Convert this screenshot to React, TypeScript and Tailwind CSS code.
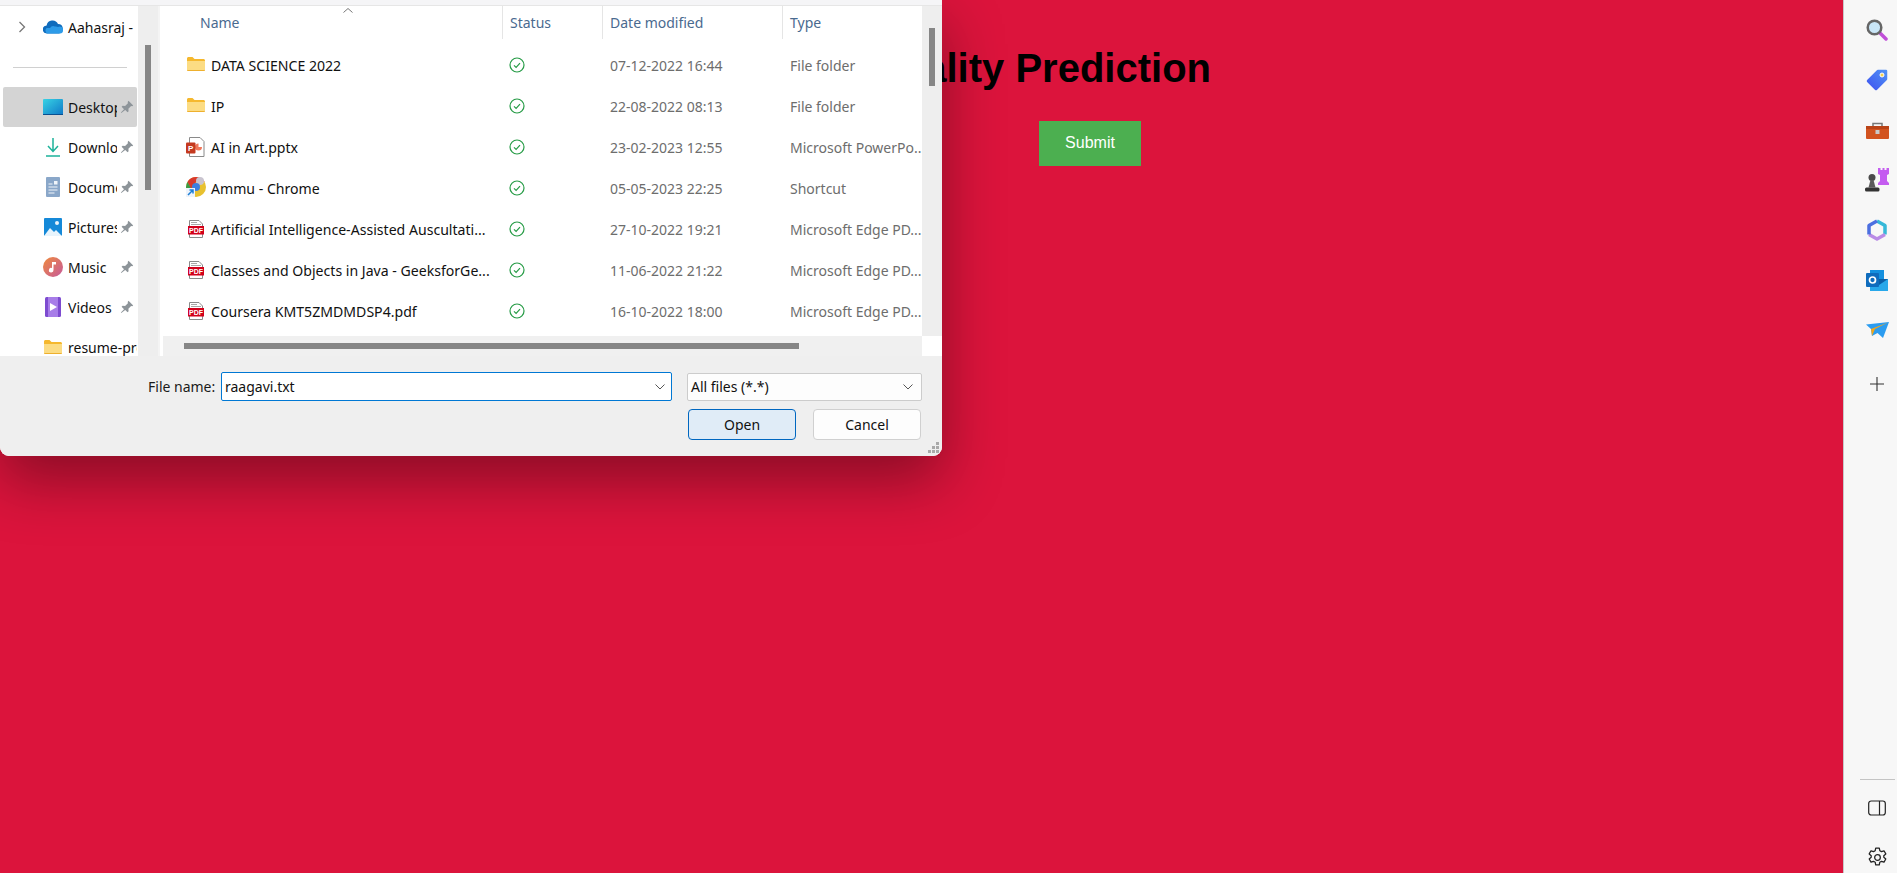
import React from "react";

const SEGOE = "font-['Noto_Sans','Open_Sans',sans-serif]";

const rows = [
  { name: "DATA SCIENCE 2022", date: "07-12-2022 16:44", type: "File folder", icon: "folder" },
  { name: "IP", date: "22-08-2022 08:13", type: "File folder", icon: "folder" },
  { name: "AI in Art.pptx", date: "23-02-2023 12:55", type: "Microsoft PowerPo...", icon: "ppt" },
  { name: "Ammu - Chrome", date: "05-05-2023 22:25", type: "Shortcut", icon: "chrome" },
  { name: "Artificial Intelligence-Assisted Auscultati...", date: "27-10-2022 19:21", type: "Microsoft Edge PD...", icon: "pdf" },
  { name: "Classes and Objects in Java - GeeksforGe...", date: "11-06-2022 21:22", type: "Microsoft Edge PD...", icon: "pdf" },
  { name: "Coursera KMT5ZMDMDSP4.pdf", date: "16-10-2022 18:00", type: "Microsoft Edge PD...", icon: "pdf" },
];

function FolderIcon({ className }: { className?: string }) {
  return (
    <svg className={className} viewBox="0 0 18 14">
      <path d="M0 1.500C0 .7.7 0 1.500 0h4L7.500 2H16.500c.8 0 1.500.7 1.500 1.500V12.500c0 .8-.7 1.500-1.500 1.500h-15C.7 14 0 13.300 0 12.500Z" fill="#f5b82e" />
      <path d="M0 4h18v8.500c0 .8-.7 1.500-1.500 1.500h-15C.7 14 0 13.300 0 12.500Z" fill="#fcdc83" />
      <path d="M0 13h18v.2c-.3.5-.8.8-1.500.8h-15c-.7 0-1.200-.3-1.500-.8Z" fill="#eeb02e" />
    </svg>
  );
}

function PdfIcon() {
  return (
    <svg className="ml-[1px] h-[18px] w-[16px]" viewBox="0 0 16 18">
      <path d="M1.500.5h9.500l3.500 3.500v13.500h-13Z" fill="#fff" stroke="#8a8a8a" />
      <path d="M3 2.500h6M3 4.500h10" stroke="#a8a8a8" />
      <rect x="0" y="6" width="16" height="8.500" fill="#d2001a" />
      <text x="8" y="12.800" textAnchor="middle" fontSize="7" fontWeight="700" fill="#fff" fontFamily="Liberation Sans, sans-serif">PDF</text>
    </svg>
  );
}

function PptIcon() {
  return (
    <svg className="-ml-[1px] h-[20px] w-[19px]" viewBox="0 0 19 20">
      <path d="M3.500.5h10.500l4 4v15h-14.500Z" fill="#fff" stroke="#8a8a8a" />
      <path d="M12.500 6.500a3.500 3.500 0 1 0 3.500 3.500h-3.500Z" fill="#f0775a" />
      <rect x="0" y="5.500" width="9.500" height="11" rx="1" fill="#c4391f" />
      <text x="4.700" y="14" textAnchor="middle" fontSize="8" fontWeight="700" fill="#fff" fontFamily="Liberation Sans, sans-serif">P</text>
    </svg>
  );
}

function ChromeIcon() {
  return (
    <svg className="-ml-[1px] -mt-[2px] h-[20px] w-[20px]" viewBox="0 0 20 20">
      <circle cx="10" cy="10" r="10" fill="#e8c12f" />
      <path d="M10 0a10 10 0 0 0-8.600 5L5 12l5-7h8.700A10 10 0 0 0 10 0Z" fill="#d9392c" />
      <path d="M1.400 5A10 10 0 0 0 5 18.600L9 13 5 11Z" fill="#3a9b46" />
      <circle cx="14" cy="4" r="4" fill="#c9c4cf" />
      <circle cx="10" cy="10" r="4" fill="#3d7fe0" />
      <rect x="0" y="11" width="9" height="9" fill="#eef3fa" />
      <path d="M2 18l5-5M3.500 13H7v3.500" stroke="#1c7fd6" strokeWidth="1.500" fill="none" />
    </svg>
  );
}

function RowIcon({ kind }: { kind: string }) {
  if (kind === "folder") return <FolderIcon className="-mt-[2px] h-[14px] w-[18px]" />;
  if (kind === "ppt") return <PptIcon />;
  if (kind === "chrome") return <ChromeIcon />;
  return <PdfIcon />;
}

function StatusIcon() {
  return (
    <svg className="-mt-[1px] h-[16px] w-[16px]" viewBox="0 0 16 16" fill="none" stroke="#259b45" strokeWidth="1.200">
      <circle cx="8" cy="8" r="7" />
      <path d="M5 8.300l2.100 2.100L11 6.200" />
    </svg>
  );
}

function Pin() {
  return (
    <svg className="h-[14px] w-[14px] shrink-0" viewBox="0 0 14 14" fill="#8d9499">
      <path d="M8.500.8l4.700 4.700-1 .8-1.100-.2-2.700 2.700.2 2.500-1 1-2.400-2.400L1.300 13l-.4-.4 3.100-3.400L1.600 6.800l1-1 2.500.2L7.900 3.300l-.2-1.200Z" />
    </svg>
  );
}

function NavRow({ label, icon, active, pin = true }: { label: string; icon: React.ReactNode; active?: boolean; pin?: boolean }) {
  return (
    <div className={`ml-[3px] flex h-[40px] w-[134px] items-center rounded-[2px] ${active ? "bg-[#d4d4d4]" : ""}`}>
      <div className="flex w-[60px] shrink-0 justify-end">
        <div className="flex h-[20px] w-[20px] items-center justify-center">{icon}</div>
      </div>
      <div className={`ml-[5px] overflow-hidden whitespace-nowrap text-[#111] ${pin ? "w-[49px]" : "w-[69px]"}`}>{label}</div>
      {pin && <div className="ml-[3px]"><Pin /></div>}
    </div>
  );
}

function Chevron() {
  return (
    <svg className="h-[10px] w-[12px]" viewBox="0 0 12 10" fill="none" stroke="#555" strokeWidth="1">
      <path d="M1.500 2.500L6 7l4.500-4.500" />
    </svg>
  );
}

function NavPane() {
  return (
    <div className="flex w-[158px] shrink-0">
      <div className="h-[350px] w-[138px] overflow-hidden bg-white">
        <div className="flex h-[40px] items-center pt-[2px]">
          <svg className="ml-[18px] h-[12px] w-[8px]" viewBox="0 0 8 12" fill="none" stroke="#777" strokeWidth="1.300">
            <path d="M1.500 1l5 5-5 5" />
          </svg>
          <svg className="ml-[17px] h-[14px] w-[20px]" viewBox="0 0 20 14">
            <path d="M4 13.500a4 4 0 0 1-.4-8A6 6 0 0 1 15 4a4.800 4.800 0 0 1 1 9.500Z" fill="#0f6cbd" />
            <path d="M7 8a4 4 0 0 1 5-1.500 4 4 0 0 1 3 .5 3.300 3.300 0 0 1 5 3.500 3 3 0 0 1-3 3H4a3.500 3.500 0 0 1-.4-5.500Z" fill="#2d9be8" />
          </svg>
          <div className="ml-[5px] whitespace-nowrap text-[#111]">Aahasraj -</div>
        </div>
        <div className="mx-[13px] mt-[21px] h-px w-[114px] bg-[#d0d0d0]" />
        <div className="mt-[19px] flex flex-col">
          <NavRow label="Desktop" active icon={
            <svg className="h-[16px] w-[20px]" viewBox="0 0 20 16">
              <defs><linearGradient id="desk" x1="0" y1="0" x2="1" y2="1"><stop offset="0" stopColor="#38d3e4" /><stop offset="1" stopColor="#0f78c8" /></linearGradient></defs>
              <rect width="20" height="16" rx="1" fill="url(#desk)" />
              <rect y="15" width="20" height="1" fill="#0b4f8f" />
            </svg>
          } />
          <NavRow label="Downloads" icon={
            <svg className="h-[20px] w-[14px]" viewBox="0 0 14 20" fill="none" stroke="#1db39a" strokeWidth="1.500">
              <path d="M7 1v13M2 9l5 5.500L12 9M0 19h14" />
            </svg>
          } />
          <NavRow label="Documents" icon={
            <svg className="h-[20px] w-[14px]" viewBox="0 0 14 20">
              <rect width="14" height="20" rx="1" fill="#8aa7c9" />
              <path d="M2.500 7h4M2.500 10h9M2.500 13h9M2.500 16h6" stroke="#f1f5fa" />
              <rect x="8" y="4" width="3.500" height="3.500" fill="#f1f5fa" />
            </svg>
          } />
          <NavRow label="Pictures" icon={
            <svg className="h-[18px] w-[18px]" viewBox="0 0 18 18">
              <rect width="18" height="18" rx="1" fill="#1589d8" />
              <path d="M0 18l6-8 4 4 2-2 6 6Z" fill="#e8f4fc" />
              <circle cx="13" cy="5" r="2" fill="#e8f4fc" />
            </svg>
          } />
          <NavRow label="Music" icon={
            <svg className="h-[20px] w-[20px]" viewBox="0 0 20 20">
              <defs><linearGradient id="mus" x1="0" y1="0" x2="1" y2="1"><stop offset="0" stopColor="#ef8a3c" /><stop offset="1" stopColor="#c65a9c" /></linearGradient></defs>
              <circle cx="10" cy="10" r="10" fill="url(#mus)" />
              <path d="M9 5h4v2.500h-2.500V13a2.300 2.300 0 1 1-1.500-2Z" fill="#fff" />
            </svg>
          } />
          <NavRow label="Videos" icon={
            <svg className="h-[20px] w-[16px]" viewBox="0 0 16 20">
              <rect width="16" height="20" rx="1.500" fill="#7d4bd0" />
              <rect x="3" y="0" width="10" height="20" fill="#a77de8" />
              <path d="M5 6l7 4-7 4Z" fill="#fff" />
            </svg>
          } />
          <NavRow label="resume-project" pin={false} icon={<FolderIcon className="h-[14px] w-[18px]" />} />
        </div>
      </div>
      <div className="w-[20px] bg-[#eeeeee] pl-[7px] pt-[39px]">
        <div className="h-[145px] w-[6px] bg-[#868686]" />
      </div>
    </div>
  );
}

function FileList() {
  return (
    <div className="flex h-[350px] w-[784px] flex-col border-l-[2px] border-l-[#f4f4f4]">
      <div className="flex h-[330px]">
        <div className="ml-[3px] w-[759px]">
          <div className="relative mb-[6px] flex h-[33px] text-[#4a6a8f]">
            <svg className="absolute left-[180px] top-[2px] h-[5px] w-[10px]" viewBox="0 0 10 5" fill="none" stroke="#777" strokeWidth="1">
              <path d="M.500 4.500L5 .5l4.500 4" />
            </svg>
            <div className="flex w-[340px] items-center border-r border-r-[#e5e5e5] pl-[37px]">Name</div>
            <div className="flex w-[100px] items-center border-r border-r-[#e5e5e5] pl-[7px]">Status</div>
            <div className="flex w-[180px] items-center border-r border-r-[#e5e5e5] pl-[7px]">Date modified</div>
            <div className="flex w-[139px] items-center pl-[7px]">Type</div>
          </div>
          {rows.map((r) => (
            <div key={r.name} className="flex h-[41px] items-center">
              <div className="flex w-[340px] items-center whitespace-nowrap text-[14.1px] text-[#111]">
                <div className="ml-[24px] flex w-[24px] items-center">
                  <RowIcon kind={r.icon} />
                </div>
                {r.name}
              </div>
              <div className="w-[100px] pl-[6px]"><StatusIcon /></div>
              <div className="w-[180px] whitespace-nowrap pl-[7px] text-[#6d6d6d]">{r.date}</div>
              <div className="w-[139px] whitespace-nowrap pl-[7px] text-[#6d6d6d]">{r.type}</div>
            </div>
          ))}
        </div>
        <div className="w-[20px] bg-[#eeeeee] pl-[7px] pt-[22px]">
          <div className="h-[58px] w-[6px] bg-[#868686]" />
        </div>
      </div>
      <div className="flex h-[20px]">
        <div className="ml-[3px] w-[759px] bg-[#f0f0f0] pl-[21px] pt-[7px]">
          <div className="h-[6px] w-[615px] bg-[#868686]" />
        </div>
        <div className="w-[20px] bg-white" />
      </div>
    </div>
  );
}

function Footer() {
  return (
    <div className="relative h-[100px] bg-[#efefef] pt-[16px]">
      <div className="flex items-center">
        <div className="ml-[148px] w-[73px] whitespace-nowrap text-[#1a1a1a]">File name:</div>
        <div className="flex h-[29px] w-[451px] items-center justify-between rounded-[2px] border border-[#0078d4] bg-white pl-[3px] pr-[5px] text-[#111]">
          raagavi.txt
          <Chevron />
        </div>
        <div className="ml-[15px] flex h-[28px] w-[235px] items-center justify-between rounded-[2px] border border-[#cccccc] bg-[#fdfdfd] pl-[3px] pr-[7px] text-[#111]">
          All files (*.*)
          <Chevron />
        </div>
      </div>
      <div className="ml-[688px] mt-[8px] flex gap-[17px]">
        <div className="flex h-[31px] w-[108px] items-center justify-center rounded-[4px] border border-[#0067c0] bg-[#e0ecf7] text-[#111]">Open</div>
        <div className="flex h-[31px] w-[108px] items-center justify-center rounded-[4px] border border-[#d0d0d0] bg-[#fdfdfd] text-[#111]">Cancel</div>
      </div>
      <svg className="absolute bottom-[2px] right-[2px] h-[12px] w-[12px]" viewBox="0 0 12 12" fill="#a9a9a9">
        <rect x="8" y="0" width="3" height="3" />
        <rect x="4" y="4" width="3" height="3" />
        <rect x="8" y="4" width="3" height="3" />
        <rect x="0" y="8" width="3" height="3" />
        <rect x="4" y="8" width="3" height="3" />
        <rect x="8" y="8" width="3" height="3" />
      </svg>
    </div>
  );
}

function SideSlot({ children }: { children: React.ReactNode }) {
  return <div className="flex h-[50px] items-center justify-center">{children}</div>;
}

function Sidebar() {
  return (
    <div className="flex w-[54px] shrink-0 flex-col items-center border-l border-l-[#c8c8c8] bg-[#f7f7f7] pl-[13px] pt-[5px]">
      <SideSlot>
        <svg className="h-[22px] w-[22px]" viewBox="0 0 22 22">
          <path d="M13 13l7 7" stroke="#c04fd8" strokeWidth="3.500" strokeLinecap="round" />
          <circle cx="8.500" cy="8.500" r="6.800" fill="#c9e6f7" stroke="#666" strokeWidth="2.500" />
        </svg>
      </SideSlot>
      <SideSlot>
        <svg className="h-[22px] w-[22px]" viewBox="0 0 22 22">
          <defs><linearGradient id="tag" x1="1" y1="0" x2="0" y2="1"><stop offset="0" stopColor="#4f8ff5" /><stop offset="1" stopColor="#3f55f0" /></linearGradient></defs>
          <path d="M12 2h8v8L10 20 2 12Z" fill="url(#tag)" stroke="url(#tag)" strokeWidth="2.500" strokeLinejoin="round" />
          <circle cx="16" cy="6" r="2" fill="#f4d04a" stroke="#fff" />
        </svg>
      </SideSlot>
      <SideSlot>
        <svg className="h-[17px] w-[23px]" viewBox="0 0 23 17">
          <path d="M7 5V1.500h9V5" fill="none" stroke="#777" strokeWidth="1.500" />
          <rect x="0" y="4" width="23" height="13" rx="1" fill="#d2531f" />
          <rect x="0" y="4" width="23" height="3" fill="#b94317" />
          <rect x="9.500" y="8" width="4" height="4" fill="#c9c9c9" />
        </svg>
      </SideSlot>
      <SideSlot>
        <svg className="h-[24px] w-[24px]" viewBox="0 0 24 24">
          <path d="M13 0h2.500v2h2V0h2v2h2V0H24v6l-2 1v6l2 2v2H13v-2l2-2V7l-2-1Z" fill="#c45cf0" />
          <circle cx="7" cy="9.500" r="3.500" fill="#4a4a4a" />
          <path d="M5.500 12h3l2 7.500h-7Z" fill="#5a5a5a" />
          <rect x="0" y="19.500" width="14.500" height="4" rx="1.500" fill="#333" />
        </svg>
      </SideSlot>
      <SideSlot>
        <svg className="h-[22px] w-[22px]" viewBox="0 0 22 22">
          <path d="M11 2l8 4.500v9" fill="none" stroke="#35b8d8" strokeWidth="3.500" strokeLinejoin="round" />
          <path d="M19 15.500L11 20l-8-4.500" fill="none" stroke="#b98be6" strokeWidth="3.500" strokeLinejoin="round" />
          <path d="M3 15.500v-9L11 2" fill="none" stroke="#4c6fe0" strokeWidth="3.500" strokeLinejoin="round" />
          <circle cx="11" cy="11" r="4.500" fill="#f7f7f7" />
        </svg>
      </SideSlot>
      <SideSlot>
        <svg className="h-[21px] w-[22px]" viewBox="0 0 22 21">
          <rect x="4" y="0" width="14" height="10" fill="#1490df" />
          <path d="M4 9h18v12H4Z" fill="#28a8ea" />
          <path d="M22 9l-9 6-9-6" fill="#0a5fa8" />
          <rect x="0" y="3" width="13" height="14" rx="1" fill="#0f6cbd" />
          <circle cx="6.500" cy="10" r="3" fill="none" stroke="#fff" strokeWidth="1.700" />
        </svg>
      </SideSlot>
      <SideSlot>
        <svg className="h-[16px] w-[23px]" viewBox="0 0 23 16">
          <path d="M0 2.500L23 0l-6 16-5.500-5L6 14 5 7Z" fill="#2b9cf0" />
          <path d="M5 7l17-6.500L9 7l-3 7Z" fill="#f2a71b" />
        </svg>
      </SideSlot>
      <div className="mt-[4px]">
        <SideSlot>
          <svg className="h-[16px] w-[16px]" viewBox="0 0 16 16" fill="none" stroke="#333" strokeWidth="1.100">
            <path d="M8 1v14M1 8h14" />
          </svg>
        </SideSlot>
      </div>
      <div className="mt-auto flex flex-col items-center pb-[5px]">
        <div className="mb-[20px] h-px w-[35px] bg-[#c4c4c4]" />
        <svg className="mb-[31px] h-[16px] w-[18px]" viewBox="0 0 18 16" fill="none" stroke="#222" strokeWidth="1.200">
          <rect x=".7" y="1" width="16.600" height="14" rx="2.500" />
          <path d="M11.500 1v14" />
        </svg>
        <svg className="h-[21px] w-[21px]" viewBox="0 0 20 20" fill="none" stroke="#222" strokeWidth="1.200">
          <circle cx="10" cy="10" r="2.700" />
          <path d="M8.300 1h3.400l.5 2.500 1.600.9 2.400-.8 1.700 3-1.900 1.700v1.400l1.900 1.700-1.700 3-2.400-.8-1.600.9-.5 2.500H8.300l-.5-2.500-1.600-.9-2.400.8-1.700-3 1.900-1.700V8.300L2.100 6.600l1.700-3 2.400.8 1.600-.9Z" strokeLinejoin="round" />
        </svg>
      </div>
    </div>
  );
}

export default function App() {
  return (
    <div className="relative flex h-[873px] w-[1897px] overflow-hidden bg-[#dc143c]">
      <main className="flex-1 font-['Liberation_Sans',Arial,sans-serif]">
        <div className="ml-[650px] mt-[45px] w-[561px] text-right text-[40px] font-bold leading-[46px] text-black">Personality Prediction</div>
        <div className="ml-[1039px] mt-[30px] flex h-[45px] w-[102px] items-center justify-center bg-[#4caf50] pb-[2px] text-[16px] text-white">Submit</div>
      </main>
      <Sidebar />
      {/* the file picker sits on top of the page, like the real window */}
      <div className={`absolute left-0 top-0 w-[942px] overflow-hidden rounded-b-[9px] bg-white text-[14px] shadow-[0_24px_60px_rgba(0,0,0,0.38)] ${SEGOE}`}>
        <div className="h-[6px] border-b border-b-[#e6e6e6] bg-[#f5f5f7]" />
        <div className="flex">
          <NavPane />
          <FileList />
        </div>
        <Footer />
      </div>
    </div>
  );
}
